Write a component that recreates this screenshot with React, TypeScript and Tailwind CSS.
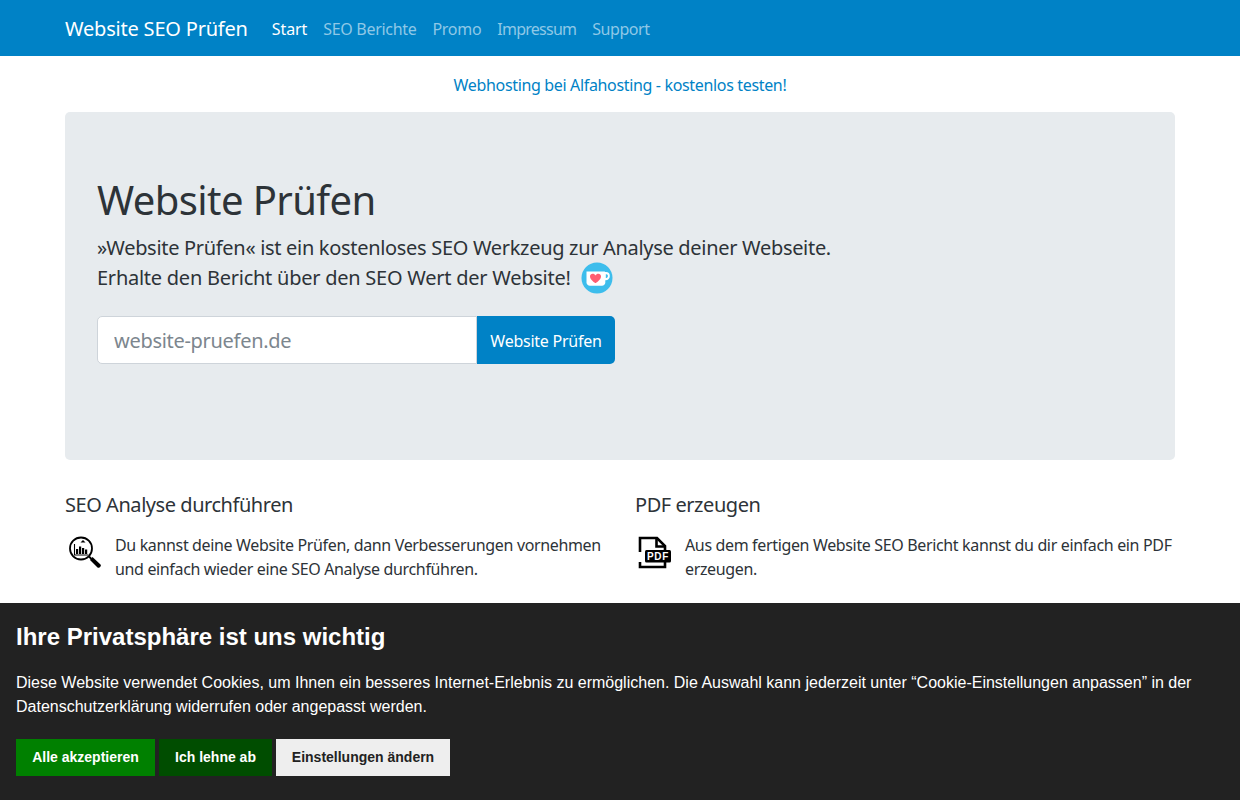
const ubuntu = "font-['Noto_Sans','Open_Sans',sans-serif]"

function KofiIcon() {
  return (
    <svg viewBox="0 0 32 32" className="h-[32px] w-[32px] shrink-0">
      <circle cx="16" cy="16" r="15.5" fill="#3dbdec" />
      <path d="M5.500 9.500h17.500c.8 0 1.300.5 1.300 1.200v9.800c0 1.900-1.500 3.300-3.300 3.300H9c-1.900 0-3.500-1.500-3.500-3.300z" fill="#fff" />
      <path d="M24 10h1c2.500 0 3.800 1.700 3.800 3.900 0 2.500-1.700 4.300-4 4.300H24z" fill="#fff" />
      <path d="M24.800 12.300h.6c1 0 1.500.7 1.500 1.700 0 1-.6 1.900-1.600 1.900h-.5z" fill="#3dbdec" />
      <path d="M14.500 21c-.3 0-5.500-3.300-5.500-6.600 0-1.700 1.200-2.700 2.600-2.700 1.300 0 2.300.7 2.900 1.700.6-1 1.600-1.700 2.900-1.700 1.400 0 2.600 1 2.600 2.700 0 3.300-5.200 6.600-5.500 6.600z" fill="#ff5e72" />
    </svg>
  )
}

function AnalysisIcon() {
  return (
    <svg viewBox="0 0 36 36" className="h-[36px] w-[36px] shrink-0">
      <circle cx="16" cy="14.500" r="11" fill="none" stroke="#000" strokeWidth="1.800" />
      <path d="M24 22.500l2.500 2.500" stroke="#000" strokeWidth="1.800" />
      <path d="M27.500 23l8 7.500c.6.700.5 1.500-.5 2.500s-1.800 1.100-2.500.5L25 26z" fill="#000" />
      <path d="M9.500 10v11h14" fill="none" stroke="#000" strokeWidth="1.100" />
      <path d="M11 15h2.200v5H11zM14 12.500h2.200V20H14zM17 14h2.200v6H17zM20 15.500h2.200V20H20z" fill="#000" />
      <path d="M15.500 8.500l2.500-2.500 2.500 2.500z" fill="#000" />
    </svg>
  )
}

function PdfIcon() {
  return (
    <svg viewBox="0 0 36 36" className="h-[36px] w-[36px] shrink-0">
      <path d="M5 18V4h17l8 8v6M30 28v5H5v-5" fill="none" stroke="#000" strokeWidth="2.600" />
      <path d="M21.500 4v8.500H30" fill="none" stroke="#000" strokeWidth="2.600" />
      <rect x="10" y="16" width="26" height="12.500" rx="1.500" fill="#000" />
      <text x="23" y="26" textAnchor="middle" fill="#fff" fontSize="10" fontWeight="700" letterSpacing="0.6" className="font-['Liberation_Sans',sans-serif]">PDF</text>
    </svg>
  )
}

function Feature({ title, icon, children }: { title: string; icon: React.ReactNode; children: React.ReactNode }) {
  return (
    <div className="w-[540px]">
      <h4 className="text-[20px] leading-[24px] font-normal text-[#2d3338] tracking-[-0.45px]">{title}</h4>
      <div className="mt-[16px] flex gap-[14px]">
        <div className="pt-[1px]">{icon}</div>
        <p className="text-[16px] leading-[24px] text-[#2d3338] tracking-[-0.35px]">{children}</p>
      </div>
    </div>
  )
}

export default function App() {
  return (
    <div className={`min-h-[800px] bg-white ${ubuntu}`}>
      <nav className="flex h-[56px] items-center bg-[#0082c6] pt-[2px] pl-[65px]">
        <a className="text-[20px] leading-[30px] text-white tracking-[-0.2px]">Website SEO Prüfen</a>
        <div className="ml-[24px] flex gap-[16px] text-[16px] tracking-[-0.3px] text-[#8fc8e6]">
          <a className="text-white tracking-[-0.1px]">Start</a>
          <a>SEO Berichte</a>
          <a>Promo</a>
          <a className="tracking-[-0.75px]">Impressum</a>
          <a className="tracking-[-0.45px]">Support</a>
        </div>
      </nav>

      <div className="mx-auto w-[1110px]">
        <p className="pt-[17px] pb-[15px] text-center text-[16px] leading-[24px] tracking-[-0.34px] text-[#0082c6]">
          Webhosting bei Alfahosting - kostenlos testen!
        </p>

        <div className="h-[348px] rounded-[5px] bg-[#e7ebee] px-[32px] pt-[64px] text-[#2d3338]">
          <h1 className="text-[40px] leading-[48px] font-normal tracking-[-0.6px]">Website Prüfen</h1>
          <p className="mt-[9px] text-[20px] leading-[30px] tracking-[-0.31px]">
            »Website Prüfen« ist ein kostenloses SEO Werkzeug zur Analyse deiner Webseite.
          </p>
          <p className="mt-[-1px] flex items-center gap-[10px] text-[20px] leading-[30px] tracking-[-0.25px]">
            Erhalte den Bericht über den SEO Wert der Website!
            <KofiIcon />
          </p>
          <form className="mt-[22px] flex h-[48px]">
            <input
              placeholder="website-pruefen.de"
              className="w-[380px] rounded-l-[5px] border border-[#ced4da] bg-white px-[16px] pt-[2px] text-[20px] text-[#495057] placeholder:text-[#7c868e] tracking-[-0.3px]"
            />
            <button type="button" className="w-[138px] rounded-r-[5px] bg-[#0082c6] pt-[2px] text-[16px] text-white tracking-[-0.25px]">
              Website Prüfen
            </button>
          </form>
        </div>

        <div className="mt-[33px] flex gap-[30px]">
          <Feature title="SEO Analyse durchführen" icon={<AnalysisIcon />}>
            Du kannst deine Website Prüfen, dann Verbesserungen vornehmen und einfach wieder eine SEO Analyse durchführen.
          </Feature>
          <Feature title="PDF erzeugen" icon={<PdfIcon />}>
            Aus dem fertigen Website SEO Bericht kannst du dir einfach ein PDF erzeugen.
          </Feature>
        </div>
      </div>

      <div className="fixed inset-x-0 bottom-0 h-[197px] bg-[#222222] px-[16px] pt-[19px] font-['Liberation_Sans',sans-serif] text-white">
        <h2 className="text-[24px] leading-[30px] font-bold">Ihre Privatsphäre ist uns wichtig</h2>
        <p className="mt-[19px] text-[16px] leading-[24px]">
          Diese Website verwendet Cookies, um Ihnen ein besseres Internet-Erlebnis zu ermöglichen. Die Auswahl kann jederzeit unter “Cookie-Einstellungen anpassen” in der Datenschutzerklärung widerrufen oder angepasst werden.
        </p>
        <div className="mt-[20px] flex gap-[4px] text-[14px] font-bold">
          <button className="h-[37px] w-[139px] bg-[#008000] text-white">Alle akzeptieren</button>
          <button className="h-[37px] w-[113px] bg-[#004d00] text-white">Ich lehne ab</button>
          <button className="h-[37px] w-[174px] bg-[#eeeeee] text-[#222222]">Einstellungen ändern</button>
        </div>
      </div>
    </div>
  )
}
